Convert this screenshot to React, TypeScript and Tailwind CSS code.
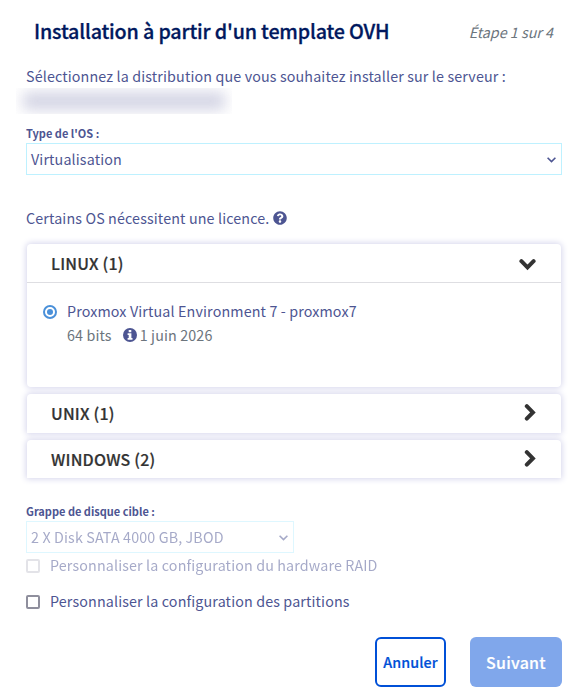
import React from "react";
import { FaQuestionCircle } from "react-icons/fa";

function Chevron({ open }: { open?: boolean }) {
  return (
    <svg viewBox="0 0 18 18" className="h-[18px] w-[18px]" fill="none" stroke="currentColor" strokeWidth="4">
      <path d={open ? "M2.4 7.2 L8.5 13.3 L14.6 7.2" : "M7.8 2.2 L13.9 8.4 L7.8 14.6"} strokeLinecap="round" />
    </svg>
  );
}

function InfoIcon() {
  return (
    <svg viewBox="0 0 14 14" className="ml-[11px] mr-[3px] h-[14px] w-[14px]">
      <circle cx="7" cy="7" r="7" fill="#4d5592" />
      <path d="M5.7 2 H8.3 V4.3 H5.7 Z M4.6 5.2 H8.4 V10 H9.5 V11.7 H4.6 V10 H5.7 V6.9 H4.6 Z" fill="#fff" />
    </svg>
  );
}

function SelectBox({ value, className }: { value: string; className: string }) {
  return (
    <div className={`flex h-8 items-center justify-between border border-[#bef1ff] pl-1 pr-[5px] ${className}`}>
      <span className="leading-8">{value}</span>
      <svg viewBox="0 0 9 6" className="mt-px h-[6px] w-[9px]" fill="none" stroke="currentColor" strokeWidth="1.6">
        <path d="M0.6 0.7 L4.5 4.6 L8.4 0.7" />
      </svg>
    </div>
  );
}

function PanelHeader({ title, open }: { title: string; open?: boolean }) {
  return (
    <div className="flex h-[38px] items-center justify-between pl-6 pr-6 text-[#333]">
      <span className="text-[16px] font-medium leading-[38px] tracking-[0.2px] [-webkit-text-stroke:0.2px]">{title}</span>
      <Chevron open={open} />
    </div>
  );
}

export default function App() {
  return (
    <div className="h-[697px] w-[578px] overflow-hidden bg-white pl-[26px] pr-4 font-['Noto_Sans_CJK_JP','Noto_Sans_CJK_SC',sans-serif] text-[14.3px] tracking-[0.13px] text-[#4d5592]">
      <header className="flex h-16 items-center justify-between pl-2 pr-[9px]">
        <h1 className="whitespace-nowrap pb-[2px] text-[19.7px] font-medium tracking-[-0.16px] text-[#00185e] [-webkit-text-stroke:0.3px]">
          Installation à partir d'un template OVH
        </h1>
        <em className="whitespace-nowrap tracking-normal text-[#6c757d]">Étape 1 sur 4</em>
      </header>
      <p className="h-6 whitespace-nowrap leading-6">
        Sélectionnez la distribution que vous souhaitez installer sur le serveur :
      </p>
      <div className="-ml-[10px] flex h-[26px] w-[216px] items-center justify-center overflow-hidden">
        <div className="h-[18px] w-[202px] shrink-0 bg-[#c9cade] opacity-80 blur-[7px]" />
      </div>
      <div className="mt-[10px] h-[19px] text-[11px] font-bold leading-[18px] tracking-normal">Type de l'OS :</div>
      <SelectBox value="Virtualisation" className="w-full" />
      <p className="mt-[31px] flex h-6 items-center gap-1 leading-6">
        Certains OS nécessitent une licence. <FaQuestionCircle className="h-[14px] w-[14px]" />
      </p>
      <div className="mt-[14px] flex flex-col gap-[7px] pl-px pr-px">
        <section className="h-[143px] rounded bg-white shadow-[0_0_6px_1px_#d5d5ec]">
          <div className="h-[39px] border-b border-[#dedee2]">
            <PanelHeader title="LINUX (1)" open />
          </div>
          <div className="flex gap-[10px] pl-4 pt-4">
            <span className="mt-[6px] flex h-[14px] w-[14px] items-center justify-center rounded-full border-2 border-[#4a90d9]">
              <span className="h-[6px] w-[6px] rounded-full bg-[#4a90d9]" />
            </span>
            <div className="leading-6">
              <div>Proxmox Virtual Environment 7 - proxmox7</div>
              <div className="flex items-center text-[#6c757d]">
                <span>64 bits</span>
                <InfoIcon />
                <span>1 juin 2026</span>
              </div>
            </div>
          </div>
        </section>
        <section className="h-[39px] rounded-t bg-white shadow-[0_0_6px_1px_#d5d5ec]">
          <PanelHeader title="UNIX (1)" />
        </section>
        <section className="h-[38px] rounded-t bg-white shadow-[0_0_6px_1px_#d5d5ec]">
          <PanelHeader title="WINDOWS (2)" />
        </section>
      </div>
      <div className="mt-6 h-[19px] text-[11px] font-bold leading-[18px] tracking-normal">Grappe de disque cible :</div>
      <div className="opacity-50">
        <SelectBox value="2 X Disk SATA 4000 GB, JBOD" className="w-[268px]" />
        <div className="flex h-6 items-center gap-[10px] leading-6">
          <span className="mt-[2px] h-[14px] w-[14px] rounded-[2px] border-2 border-[#c8c8d2]" />
          Personnaliser la configuration du hardware RAID
        </div>
      </div>
      <div className="mt-3 flex h-6 items-center gap-[10px] leading-6">
        <span className="mt-[2px] h-[14px] w-[14px] rounded-[2px] border-2 border-[#8f8f9d]" />
        Personnaliser la configuration des partitions
      </div>
      <footer className="mt-6 flex justify-end gap-6">
        <button className="h-[50px] w-[71px] whitespace-nowrap rounded-md border-2 border-[#0050d7] text-[14.3px] font-medium tracking-[0.1px] text-[#0050d7] [-webkit-text-stroke:0.2px]">
          Annuler
        </button>
        <button className="h-[50px] w-[92px] rounded-md bg-[#80a7eb] text-[16px] font-medium tracking-[0.25px] text-white [-webkit-text-stroke:0.2px]">
          Suivant
        </button>
      </footer>
    </div>
  );
}
